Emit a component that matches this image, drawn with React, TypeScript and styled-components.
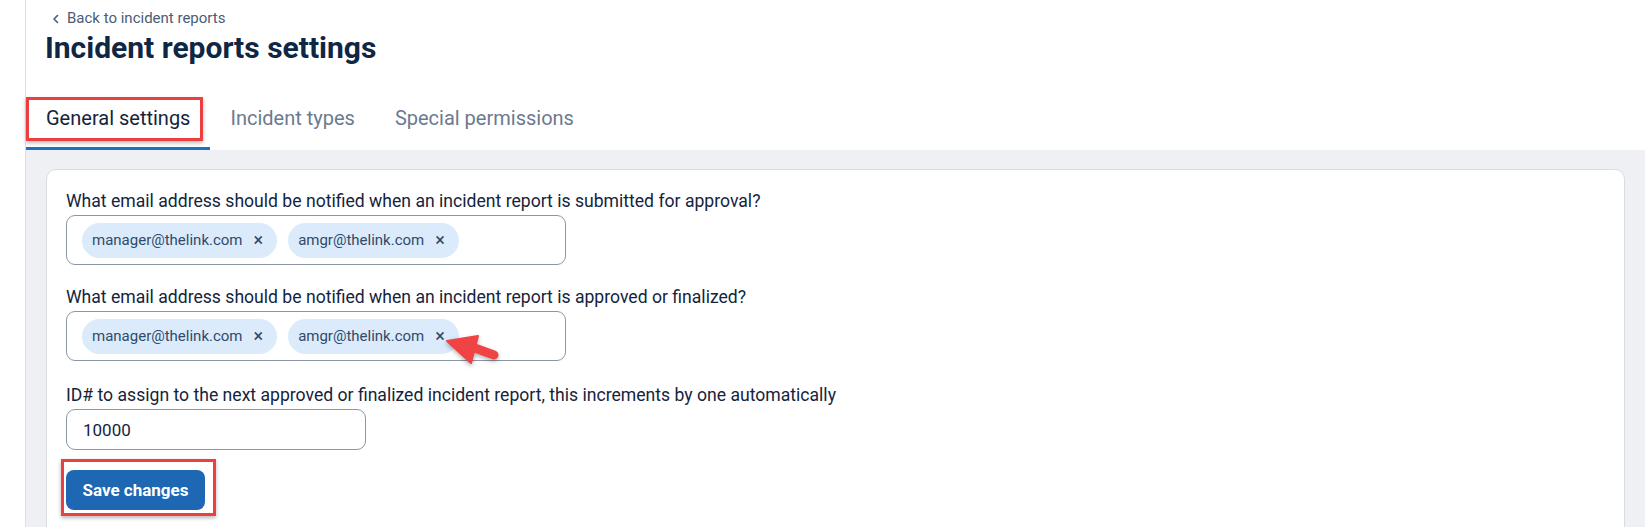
import React from "react";
import styled, { createGlobalStyle } from "styled-components";

const GlobalStyle = createGlobalStyle`
  html, body { margin: 0; padding: 0; background: #ffffff; }
  body { font-family: Roboto, "Noto Sans", "Liberation Sans", sans-serif; color: #14243d; }
  * { box-sizing: border-box; }
`;

const Page = styled.div`
  position: relative;
  display: flex;
  min-height: 527px;
  overflow: hidden;
`;

const Gutter = styled.div`
  width: 26px;
  flex: none;
  border-right: 1px solid #dcdfe4;
`;

const Main = styled.div`
  flex: 1;
  display: flex;
  flex-direction: column;
  min-width: 0;
`;

const Header = styled.div`
  padding: 8px 0 0 19px;
  display: flex;
  flex-direction: column;
`;

const BackLink = styled.a`
  display: flex;
  align-items: center;
  gap: 7px;
  font-size: 15px;
  line-height: 21px;
  color: #4b5c74;
  text-decoration: none;
  padding-left: 7px;
`;

const Title = styled.h1`
  margin: 1px 0 0;
  font-size: 30px;
  line-height: 36px;
  font-weight: 700;
  color: #0f2645;
`;

const Tabs = styled.div`
  display: flex;
  margin-top: 19px;
`;

const Tab = styled.div<{ $active?: boolean }>`
  position: relative;
  height: 65px;
  padding: 3px 20px 0;
  display: flex;
  align-items: center;
  font-size: 20px;
  color: ${(p) => (p.$active ? "#14243d" : "#6b7a8f")};
  border-bottom: 3px solid ${(p) => (p.$active ? "#1f6fc5" : "transparent")};
`;

const TabHighlight = styled.span`
  position: absolute;
  left: 0;
  top: 12px;
  right: 7px;
  bottom: 6px;
  border: 3px solid #ec4040;
  box-shadow: 0 2px 4px rgba(0, 0, 0, 0.28);
  pointer-events: none;
`;

const Content = styled.div`
  flex: 1;
  background: #eff0f4;
  padding: 19px 20px 0 20px;
`;

const Card = styled.div`
  background: #ffffff;
  border: 1px solid #d9dce1;
  border-radius: 10px;
  padding: 21px 19px 19px;
  display: flex;
  flex-direction: column;
  gap: 22px;
  min-height: 380px;
`;

const Field = styled.div<{ $offset?: number }>`
  display: flex;
  flex-direction: column;
  gap: 4px;
  margin-top: ${(p) => p.$offset ?? 0}px;
`;

const Label = styled.label`
  font-size: 17.6px;
  line-height: 20px;
  color: #14243d;
`;

const TagInput = styled.div`
  width: 500px;
  height: 50px;
  border: 1px solid #8b97a7;
  border-radius: 9px;
  display: flex;
  align-items: center;
  gap: 11px;
  padding: 0 15px;
`;

const Chip = styled.span`
  display: inline-flex;
  align-items: center;
  height: 35px;
  padding: 0 14px 0 10px;
  border-radius: 18px;
  background: #dcebfb;
  color: #2f4a6b;
  font-size: 15px;
  gap: 11px;
`;

const ChipClose = styled.span`
  font-size: 18px;
  line-height: 1;
  color: #2f4a6b;
`;

const TextInput = styled.div`
  width: 300px;
  height: 41px;
  border: 1px solid #8b97a7;
  border-radius: 9px;
  display: flex;
  align-items: center;
  padding: 0 16px;
  font-size: 17px;
  color: #14243d;
`;

const ButtonWrap = styled.div`
  position: relative;
  align-self: flex-start;
  margin-top: -2px;
`;

const SaveButton = styled.button`
  height: 40px;
  width: 139px;
  border: none;
  border-radius: 8px;
  background: #1d67b3;
  color: #ffffff;
  font-family: Roboto, "Liberation Sans", sans-serif;
  font-size: 17px;
  font-weight: 700;
  display: flex;
  align-items: center;
  justify-content: center;
`;

const ButtonHighlight = styled.span`
  position: absolute;
  left: -5px;
  top: -11px;
  right: -11px;
  bottom: -6px;
  border: 3px solid #ec4040;
  box-shadow: 0 2px 4px rgba(0, 0, 0, 0.28);
  pointer-events: none;
`;

const Arrow = styled.svg`
  position: absolute;
  left: 440px;
  top: 328px;
  filter: drop-shadow(0 2px 2px rgba(0, 0, 0, 0.3));
`;

const Chevron = () => (
  <svg width="8" height="10" viewBox="0 0 8 10">
    <path d="M5.5 1.5 L2 5 L5.5 8.5" fill="none" stroke="#4b5c74" strokeWidth="1.6" strokeLinecap="round" strokeLinejoin="round" />
  </svg>
);

const emails = ["manager@thelink.com", "amgr@thelink.com"];

export default function App() {
  return (
    <>
      <GlobalStyle />
      <Page>
        <Gutter />
        <Main>
          <Header>
            <BackLink href="#">
              <Chevron />
              Back to incident reports
            </BackLink>
            <Title>Incident reports settings</Title>
          </Header>
          <Tabs>
            <Tab $active>
              General settings
              <TabHighlight />
            </Tab>
            <Tab>Incident types</Tab>
            <Tab>Special permissions</Tab>
          </Tabs>
          <Content>
            <Card>
              <Field>
                <Label>What email address should be notified when an incident report is submitted for approval?</Label>
                <TagInput>
                  {emails.map((e) => (
                    <Chip key={e}>
                      {e}
                      <ChipClose>×</ChipClose>
                    </Chip>
                  ))}
                </TagInput>
              </Field>
              <Field>
                <Label>What email address should be notified when an incident report is approved or finalized?</Label>
                <TagInput>
                  {emails.map((e) => (
                    <Chip key={e}>
                      {e}
                      <ChipClose>×</ChipClose>
                    </Chip>
                  ))}
                </TagInput>
              </Field>
              <Field $offset={2}>
                <Label>ID# to assign to the next approved or finalized incident report, this increments by one automatically</Label>
                <TextInput>10000</TextInput>
              </Field>
              <ButtonWrap>
                <SaveButton>Save changes</SaveButton>
                <ButtonHighlight />
              </ButtonWrap>
            </Card>
          </Content>
        </Main>
        <Arrow width="70" height="45" viewBox="0 0 70 45">
          <line x1="32" y1="19" x2="54" y2="27" stroke="#f04444" strokeWidth="9" strokeLinecap="round" />
          <polygon points="7,13 38,8 31,35" fill="#f04444" strokeLinejoin="round" stroke="#f04444" strokeWidth="2" />
        </Arrow>
      </Page>
    </>
  );
}
